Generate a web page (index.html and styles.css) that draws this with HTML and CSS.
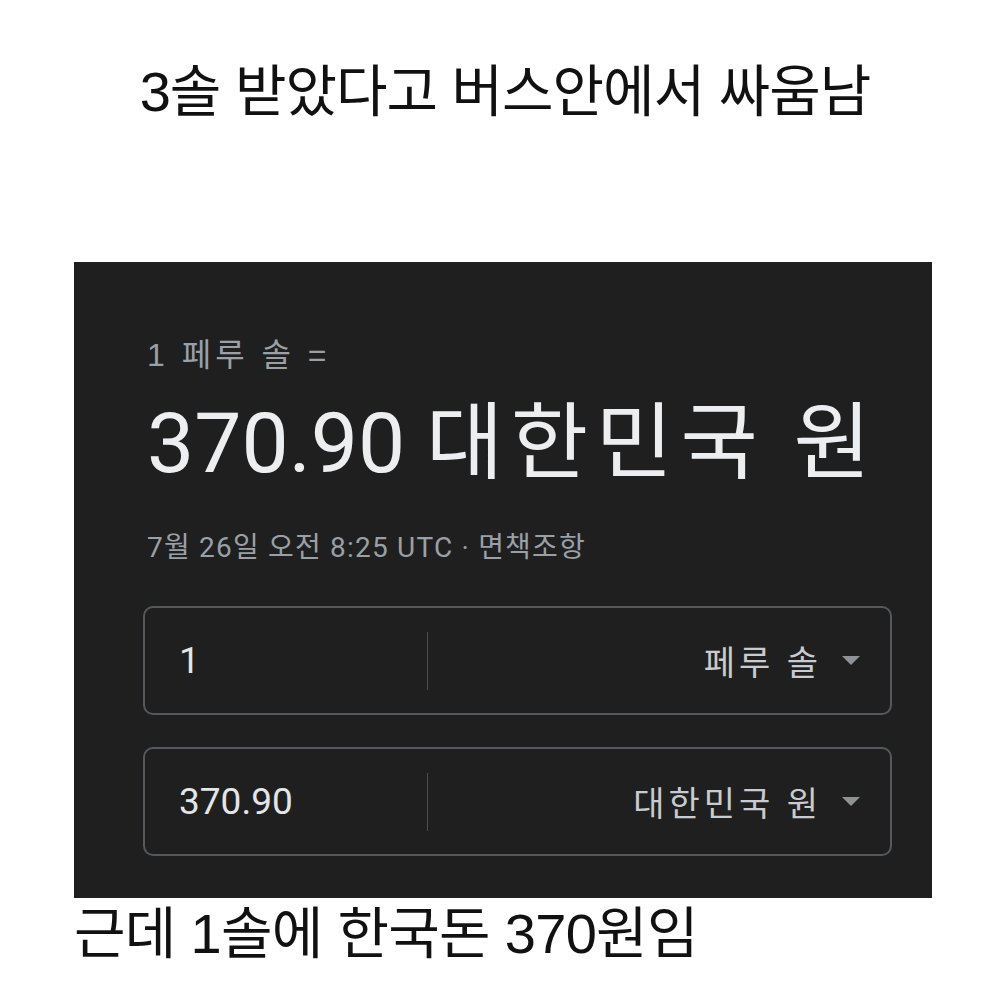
FILE: index.html
```html
<!DOCTYPE html>
<html lang="ko">
<head>
<meta charset="utf-8">
<link rel="stylesheet" href="styles.css">
</head>
<body>
<div class="page">
  <h1 class="title">3솔 받았다고 버스안에서 싸움남</h1>
  <div class="panel">
    <div class="sub">1 페루 솔 =</div>
    <div class="big"><span class="num">370.90</span> <span class="kr">대한민국 원</span></div>
    <div class="date">7월 26일 오전 8:25 UTC · 면책조항</div>
    <div class="boxes">
      <div class="box">
        <div class="val">1</div>
        <div class="sep"></div>
        <div class="cur">페루 솔<span class="arrow"></span></div>
      </div>
      <div class="box">
        <div class="val">370.90</div>
        <div class="sep"></div>
        <div class="cur">대한민국 원<span class="arrow"></span></div>
      </div>
    </div>
  </div>
  <p class="caption">근데 1솔에 한국돈 370원임</p>
</div>
</body>
</html>
```
FILE: styles.css
```css
html, body {
  margin: 0;
  padding: 0;
  background: #ffffff;
}
body {
  font-family: "Noto Sans CJK KR", "Liberation Sans", sans-serif;
  color: #111;
}
.page {
  width: 1000px;
  display: flex;
  flex-direction: column;
}
.title {
  margin: 0;
  padding: 52px 0 0 10px;
  text-align: center;
  font-weight: 400;
  font-size: 56px;
  line-height: 80px;
  font-family: "Liberation Sans", "Noto Sans CJK KR", sans-serif;
  letter-spacing: -1px;
}
.panel {
  margin: 130px 0 0 74px;
  width: 858px;
  height: 636px;
  box-sizing: border-box;
  background: #1f1f20;
  padding: 70px 40px 0 73px;
  display: flex;
  flex-direction: column;
}
.sub {
  color: #9aa0a6;
  font-size: 32px;
  line-height: 46px;
  letter-spacing: 4px;
  font-family: "Liberation Sans", "Noto Sans CJK KR", sans-serif;
}
.big {
  color: #eceef0;
  font-size: 84px;
  line-height: 112px;
  margin-top: 10px;
  white-space: nowrap;
  font-family: "Roboto", "Noto Sans CJK KR", sans-serif;
}
.big .num {
  font-family: "Roboto", sans-serif;
}
.big .kr {
  letter-spacing: 7.5px;
}
.date {
  color: #9aa0a6;
  font-size: 28px;
  line-height: 34px;
  margin-top: 31px;
  letter-spacing: 1.2px;
  font-family: "Roboto", "Noto Sans CJK KR", sans-serif;
}
.boxes {
  margin-top: 41px;
  margin-left: -4px;
  display: flex;
  flex-direction: column;
  gap: 32px;
}
.box {
  height: 109px;
  box-sizing: border-box;
  border: 2px solid #55585c;
  border-radius: 10px;
  display: flex;
  align-items: center;
  padding: 0 30px 0 34px;
  color: #e3e5e8;
}
.val {
  width: 248px;
  font-size: 37px;
  font-family: "Roboto", sans-serif;
}
.sep {
  width: 1px;
  height: 58px;
  background: #4a4d51;
}
.cur {
  flex: 1;
  display: flex;
  justify-content: flex-end;
  align-items: center;
  font-size: 34px;
  letter-spacing: 4px;
  color: #c8cbcf;
  font-family: "Roboto", "Noto Sans CJK KR", sans-serif;
}
.arrow {
  display: inline-block;
  width: 0;
  height: 0;
  margin-left: 20px;
  border-left: 9px solid transparent;
  border-right: 9px solid transparent;
  border-top: 9px solid #8e9195;
}
.caption {
  margin: 0;
  padding-left: 74px;
  font-size: 56px;
  line-height: 72px;
  font-family: "Liberation Sans", "Noto Sans CJK KR", sans-serif;
  letter-spacing: -0.7px;
}
```
